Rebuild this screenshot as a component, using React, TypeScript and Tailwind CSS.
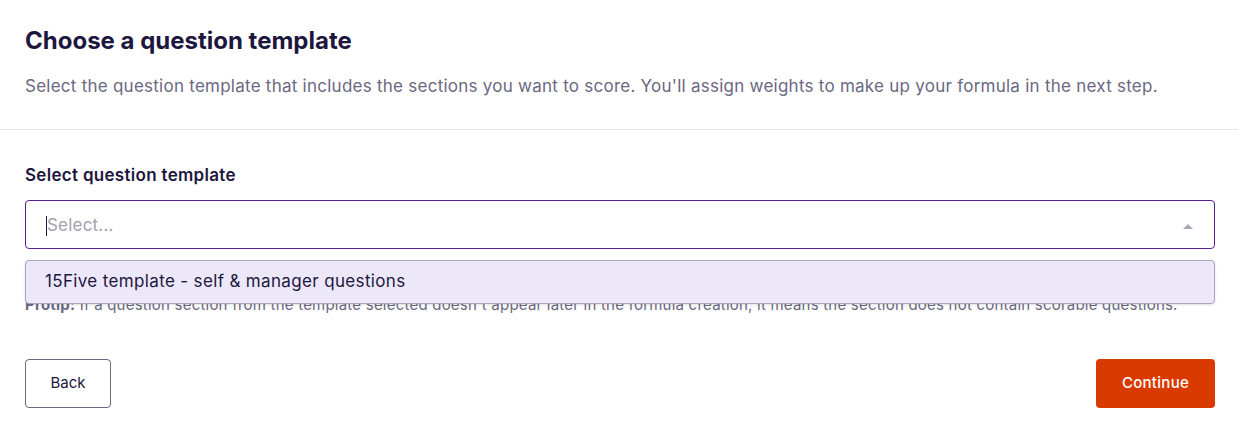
export default function App() {
  return (
    <div className="min-h-screen bg-white font-['Inter',sans-serif] text-[#1d1740]">
      {/* Header */}
      <div className="px-[25px] pt-[26px] pb-[31px] border-b border-[#e6e5ea]">
        <h1 className="text-[24px] leading-[30px] font-bold">Choose a question template</h1>
        <p className="mt-[18px] text-[17px] leading-[24px] tracking-[0.25px] text-[#6b6882]">
          Select the question template that includes the sections you want to score. You'll assign weights to make up your formula in the next step.
        </p>
      </div>

      {/* Body */}
      <div className="pl-[25px] pr-[23px] pt-[33px]">
        <label className="block text-[17px] leading-[24px] tracking-[0.3px] font-semibold">Select question template</label>
        <div className="relative mt-[13px]">
          <div className="flex items-center h-[49px] rounded-[4px] border border-[#5a1e96] bg-white pl-[20px] pr-[20px] pt-[2px]">
            <span className="w-px h-[20px] bg-[#1d1740]" />
            <span className="text-[17px] tracking-[0.2px] text-[#a3a1ae]">Select...</span>
            <div className="flex-1" />
            <svg width="12" height="8" viewBox="0 0 12 8">
              <path d="M1 7 L6 2 L11 7 Z" fill="#a8a6b2" />
            </svg>
          </div>
          <div className="absolute left-0 right-0 top-[60px] z-10 h-[44px] flex items-center rounded-[4px] border border-[#a9a5b9] bg-[#ede8f9] px-[19px] shadow-sm">
            <span className="text-[17px] tracking-[0.35px] text-[#1d1740]">15Five template - self &amp; manager questions</span>
          </div>
          <p className="mt-[46px] text-[15px] leading-[20px] tracking-[0.22px] text-[#6b6882]">
            <span className="font-bold">Protip:</span> If a question section from the template selected doesn't appear later in the formula creation, it means the section does not contain scorable questions.
          </p>
        </div>

        <div className="flex justify-between items-center mt-[44px]">
          <button className="h-[49px] w-[86px] rounded-[4px] border border-[#6b6882] text-[15px] text-[#1d1740] bg-white">Back</button>
          <button className="h-[49px] w-[119px] rounded-[4px] bg-[#d93a00] text-[15px] tracking-[0.3px] font-medium text-white">Continue</button>
        </div>
      </div>
    </div>
  );
}
